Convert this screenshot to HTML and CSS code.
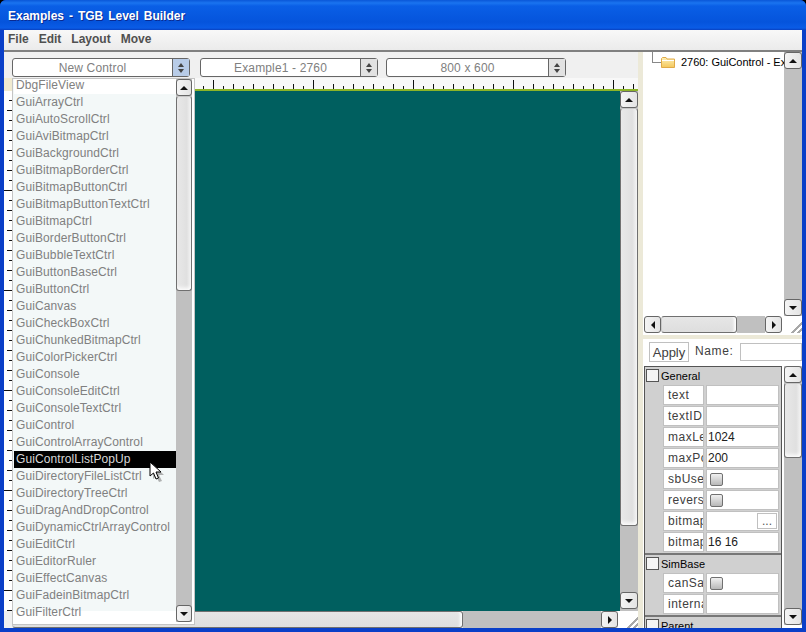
FILE: index.html
```html
<!DOCTYPE html>
<html lang="en">
<head>
<meta charset="utf-8">
<title>Examples - TGB Level Builder</title>
<link rel="stylesheet" href="styles.css">
</head>
<body>
<div class="window">
  <div class="titlebar">Examples - TGB Level Builder</div>
  <div class="client">
    <div class="menubar"><span>File</span><span>Edit</span><span>Layout</span><span>Move</span></div>
    <div class="main">
      <div class="left">
        <div class="toolbar">
          <div class="combo combo-new"><div class="combo-text">New Control</div><div class="combo-btn combo-btn-blue"><i class="up"></i><i class="down"></i></div></div>
          <div class="combo combo-example"><div class="combo-text">Example1 - 2760</div><div class="combo-btn"><i class="up"></i><i class="down"></i></div></div>
          <div class="combo combo-size"><div class="combo-text">800 x 600</div><div class="combo-btn"><i class="up"></i><i class="down"></i></div></div>
        </div>
        <div class="hruler-row"><div class="corner"></div><div class="hruler"></div></div>
        <div class="stage-row">
          <div class="vruler"></div>
          <div class="canvas"></div>
          <div class="vscroll vscroll-canvas">
            <div class="sbtn"><i class="tri-up"></i></div>
            <div class="thumb thumb-canvas"></div>
            <div class="track"></div>
            <div class="sbtn"><i class="tri-down"></i></div>
          </div>
        </div>
        <div class="hscroll hscroll-canvas">
          <div class="thumb-h thumb-h-canvas"></div>
          <div class="track"></div>
          <div class="sbtn-h"><i class="tri-right"></i></div>
          <div class="grip"></div>
        </div>
        <div class="popup">
          <div class="popup-items">
            <div class="item item-first">DbgFileView</div>
            <div class="item">GuiArrayCtrl</div>
            <div class="item">GuiAutoScrollCtrl</div>
            <div class="item">GuiAviBitmapCtrl</div>
            <div class="item">GuiBackgroundCtrl</div>
            <div class="item">GuiBitmapBorderCtrl</div>
            <div class="item">GuiBitmapButtonCtrl</div>
            <div class="item">GuiBitmapButtonTextCtrl</div>
            <div class="item">GuiBitmapCtrl</div>
            <div class="item">GuiBorderButtonCtrl</div>
            <div class="item">GuiBubbleTextCtrl</div>
            <div class="item">GuiButtonBaseCtrl</div>
            <div class="item">GuiButtonCtrl</div>
            <div class="item">GuiCanvas</div>
            <div class="item">GuiCheckBoxCtrl</div>
            <div class="item">GuiChunkedBitmapCtrl</div>
            <div class="item">GuiColorPickerCtrl</div>
            <div class="item">GuiConsole</div>
            <div class="item">GuiConsoleEditCtrl</div>
            <div class="item">GuiConsoleTextCtrl</div>
            <div class="item">GuiControl</div>
            <div class="item">GuiControlArrayControl</div>
            <div class="item item-selected">GuiControlListPopUp</div>
            <div class="item">GuiDirectoryFileListCtrl</div>
            <div class="item">GuiDirectoryTreeCtrl</div>
            <div class="item">GuiDragAndDropControl</div>
            <div class="item">GuiDynamicCtrlArrayControl</div>
            <div class="item">GuiEditCtrl</div>
            <div class="item">GuiEditorRuler</div>
            <div class="item">GuiEffectCanvas</div>
            <div class="item">GuiFadeinBitmapCtrl</div>
            <div class="item">GuiFilterCtrl</div>
          </div>
          <div class="vscroll vscroll-popup">
            <div class="sbtn"><i class="tri-up"></i></div>
            <div class="thumb thumb-popup"></div>
            <div class="track"></div>
            <div class="sbtn"><i class="tri-down"></i></div>
          </div>
        </div>
        <svg class="cursor" width="16" height="22" viewBox="0 0 16 22">
          <path d="M4 3 L15 14 L10 14 L13 20 L10 21 L7 15 L4 18 Z" fill="#777" opacity=".55"/>
          <path d="M1 1 V15 L4.5 12 L7 18 L9.5 17 L7 11 H12 Z" fill="#fff" stroke="#000" stroke-width="1"/>
        </svg>
      </div>
      <div class="splitter"></div>
      <div class="right">
        <div class="tree-pane">
          <div class="tree-row">
            <div class="tree-view">
              <div class="tree-line"></div>
              <svg class="folder" width="14" height="11" viewBox="0 0 14 11">
                <defs><linearGradient id="fg" x1="0" y1="0" x2="0" y2="1"><stop offset="0" stop-color="#fdf0b8"/><stop offset="1" stop-color="#f4c85c"/></linearGradient></defs>
                <path d="M.5 10.5 V1.5 L1.5 .5 H5 L6 2 H13.5 V10.5 Z" fill="url(#fg)" stroke="#e0aa48"/>
                <path d="M1 3.5 H13" stroke="#fff" fill="none"/>
              </svg>
              <span class="tree-label">2760: GuiControl - Examples</span>
            </div>
            <div class="vscroll vscroll-tree">
              <div class="sbtn"><i class="tri-up"></i></div>
              <div class="track"></div>
              <div class="sbtn"><i class="tri-down"></i></div>
            </div>
          </div>
          <div class="hscroll hscroll-tree">
            <div class="sbtn-h"><i class="tri-left"></i></div>
            <div class="thumb-h thumb-h-tree"></div>
            <div class="track"></div>
            <div class="sbtn-h"><i class="tri-right"></i></div>
            <div class="grip"></div>
          </div>
        </div>
        <div class="hsplit"></div>
        <div class="apply-row">
          <div class="apply-btn">Apply</div>
          <div class="name-label">Name:</div>
          <div class="name-input"></div>
        </div>
        <div class="inspector-row">
          <div class="inspector">
            <div class="group">
              <div class="group-head"><i class="check"></i>General</div>
              <div class="prop"><div class="pname">text</div><div class="pval"></div></div>
              <div class="prop"><div class="pname">textID</div><div class="pval"></div></div>
              <div class="prop"><div class="pname">maxLength</div><div class="pval">1024</div></div>
              <div class="prop"><div class="pname">maxPopupHeight</div><div class="pval">200</div></div>
              <div class="prop"><div class="pname">sbUsesNAColor</div><div class="pval"><i class="pcheck"></i></div></div>
              <div class="prop"><div class="pname">reverseTextList</div><div class="pval"><i class="pcheck"></i></div></div>
              <div class="prop"><div class="pname">bitmap</div><div class="pval pval-file"><span class="dots">...</span></div></div>
              <div class="prop"><div class="pname">bitmapBounds</div><div class="pval">16 16</div></div>
            </div>
            <div class="group">
              <div class="group-head"><i class="check"></i>SimBase</div>
              <div class="prop"><div class="pname">canSaveDynamicFields</div><div class="pval"><i class="pcheck"></i></div></div>
              <div class="prop"><div class="pname">internalName</div><div class="pval"></div></div>
            </div>
            <div class="group">
              <div class="group-head"><i class="check"></i>Parent</div>
            </div>
          </div>
          <div class="vscroll vscroll-insp">
            <div class="sbtn"><i class="tri-up"></i></div>
            <div class="thumb thumb-insp"></div>
            <div class="track"></div>
            <div class="sbtn"><i class="tri-down"></i></div>
          </div>
        </div>
      </div>
    </div>
  </div>
</div>
</body>
</html>
```
FILE: styles.css
```css
* { box-sizing: border-box; }
html, body { margin: 0; padding: 0; overflow: hidden; }
i { display: block; font-style: normal; }
body { background: #000; }
.window {
  width: 806px; height: 632px; display: flex; flex-direction: column;
  background: #0a3fc8; font-family: "Liberation Sans", Arial, sans-serif; font-size: 12px;
  border-radius: 6px 6px 0 0; overflow: hidden; padding: 0 4px 4px;
}
.titlebar {
  height: 30px; flex: none; margin: 0 -4px; padding: 2px 0 0 8px; display: flex; align-items: center;
  background: linear-gradient(#0a57d8 0, #1a74f0 3px, #0a5fe6 6px, #0554dc 22px, #0a5ce6 28px, #0840c0 30px);
  color: #fff; font-size: 12px; font-weight: bold; text-shadow: 1px 1px 0 #0a2a90; word-spacing: 1.6px;
}
.client { flex: 1; min-height: 0; display: flex; flex-direction: column; background: #f0f0f0; }
.menubar {
  height: 22px; flex: none; display: flex; align-items: center; padding: 0 0 2px 4px;
  background: linear-gradient(#f8f8f8, #ebebeb); border-bottom: 2px solid #808080;
  font-weight: bold; color: #505050;
}
.menubar span { margin-right: 10px; }
.main { flex: 1; min-height: 0; display: flex; }
.left { width: 634px; flex: none; display: flex; flex-direction: column; position: relative; background: #f0f0f0; }
.toolbar { height: 26px; flex: none; display: flex; align-items: flex-start; padding: 6px 0 0 8px; }
.combo {
  height: 19px; display: flex; background: #fff; border: 1px solid #666; border-radius: 3px;
  color: #808080; font-size: 12px; letter-spacing: .15px;
}
.combo-new { width: 178px; margin-right: 10px; }
.combo-example { width: 178px; margin-right: 8px; }
.combo-size { width: 180px; }
.combo-text { flex: 1; text-align: center; line-height: 19px; }
.combo-btn {
  width: 17px; border-left: 1px solid #666; background: #e2e2e2; display: flex; flex-direction: column;
  align-items: center; justify-content: center; gap: 2px;
}
.combo-btn-blue { background: #b8cce8; }
.combo-btn .up { border: 3px solid transparent; border-top: 0; border-bottom: 4px solid #444; }
.combo-btn .down { border: 3px solid transparent; border-bottom: 0; border-top: 4px solid #444; }
.hruler-row { height: 13px; flex: none; display: flex; }
.corner { width: 8px; flex: none; background: #f0ead0; }
.hruler {
  flex: 1; border-bottom: 2px solid #8cb428;
  background-color: #f8f8f8;
  background-image:
    linear-gradient(90deg, #111 1px, transparent 1px),
    linear-gradient(90deg, #111 1px, transparent 1px),
    linear-gradient(90deg, #111 1px, transparent 1px);
  background-repeat: repeat-x;
  background-size: 100px 9px, 20px 5px, 20px 3px;
  background-position: 1px 2px, 1px 6px, 11px 8px;
  background-origin: padding-box;
  background-clip: padding-box;
}
.stage-row { flex: 1; min-height: 0; display: flex; }
.vruler {
  width: 8px; flex: none; background-color: #fff;
  background-image:
    linear-gradient(#111 1px, transparent 1px),
    linear-gradient(#111 1px, transparent 1px),
    linear-gradient(#111 1px, transparent 1px);
  background-repeat: repeat-y;
  background-size: 8px 100px, 5px 20px, 3px 20px;
  background-position: 0 -1px, 3px -1px, 5px 9px;
}
.canvas { flex: 1; background: #005f5f; }
.vscroll { display: flex; flex-direction: column; flex: none; width: 18px; background: #c0c0c0; }
.vscroll .track, .hscroll .track { flex: 1; background: #c0c0c0; }
.sbtn, .sbtn-h {
  flex: none; background: linear-gradient(90deg, #f4f4f4, #e4e4e4); border: 1px solid #666;
  border-radius: 3px; display: flex; align-items: center; justify-content: center;
}
.sbtn { height: 17px; }
.sbtn-h { width: 17px; }
.tri-up { border: 4px solid transparent; border-top: 0; border-bottom: 4px solid #111; }
.tri-down { border: 4px solid transparent; border-bottom: 0; border-top: 4px solid #111; }
.tri-left { border: 4px solid transparent; border-left: 0; border-right: 4px solid #111; }
.tri-right { border: 4px solid transparent; border-right: 0; border-left: 4px solid #111; }
.thumb {
  flex: none; background: linear-gradient(90deg, #e8e8e8, #e0e0e0 70%, #f4f4f4);
  border: 1px solid #707070; border-top-color: #c8c8c8; border-radius: 3px;
  box-shadow: inset 0 -5px 4px -3px #fff;
}
.thumb-canvas { height: 418px; }
.thumb-popup { height: 195px; }
.thumb-insp { height: 75px; }
.vscroll-canvas { padding-bottom: 2px; }
.hscroll { display: flex; flex: none; height: 17px; }
.hscroll-canvas { margin: 0 0 0 8px; }
.thumb-h {
  flex: none; background: linear-gradient(#e6e6e6, #dedede);
  border: 1px solid #707070; border-left-color: #c8c8c8; border-radius: 3px;
  box-shadow: inset -4px 0 3px -2px #fff;
}
.thumb-h-canvas { width: 451px; }
.thumb-h-tree { width: 76px; }
.grip {
  width: 20px; flex: none; background: #fff;
  background-image: linear-gradient(135deg, transparent 70%, #a8a8a8 70%, #a8a8a8 76%, transparent 76%, transparent 86%, #a8a8a8 86%, #a8a8a8 92%, transparent 92%);
}
.popup {
  position: absolute; left: 8px; top: 26px; width: 183px; height: 547px; display: flex;
  background: #fff; border: 1px solid #c4c4c4; padding-right: 2px;
}
.popup-items { flex: 1; min-width: 0; height: 532px; background: #f3f8f8; padding-left: 1px; }
.item { height: 17px; line-height: 16px; padding-left: 2px; color: #808080; font-size: 12px; letter-spacing: .1px; white-space: nowrap; }
.item-first { height: 15px; line-height: 13px; background: #fff; }
.item-selected { background: #000; color: #d8d8d8; }
.vscroll-popup { width: 16px; height: 543px; }
.cursor { position: absolute; left: 145px; top: 409px; }
.splitter { width: 5px; flex: none; background: #ece9d8; }
.right { width: 159px; flex: none; display: flex; flex-direction: column; background: #fff; }
.tree-pane { flex: none; height: 283px; display: flex; flex-direction: column; }
.tree-row { flex: none; height: 264px; display: flex; }
.tree-view { flex: 1; min-width: 0; position: relative; overflow: hidden; display: flex; align-items: flex-start; padding: 5px 0 0 18px; }
.tree-line { position: absolute; left: 9px; top: 0; width: 9px; height: 11px; border-left: 1px solid #888; border-bottom: 1px solid #888; }
.folder { flex: none; margin-right: 6px; }
.tree-label { white-space: nowrap; font-size: 11px; color: #000; line-height: 11px; letter-spacing: -.03px; }
.vscroll-tree { height: 264px; }
.hscroll-tree { margin-left: 1px; height: 17px; }
.hsplit { height: 4px; flex: none; background: #ece9d8; }
.apply-row { height: 27px; flex: none; display: flex; align-items: flex-start; overflow: hidden; padding: 3px 0 0 6px; }
.apply-btn { width: 40px; height: 20px; border: 1px solid #c0c0c0; text-align: center; line-height: 19px; color: #404040; font-size: 13px; }
.name-label { margin-left: 6px; width: 45px; flex: none; line-height: 18px; color: #404040; letter-spacing: .6px; }
.name-input { width: 62px; flex: none; height: 18px; margin-top: 1px; border: 1px solid #c0c0c0; }
.inspector-row { flex: 1; min-height: 0; display: flex; padding-left: 1px; gap: 2px; }
.inspector { width: 138px; flex: none; overflow: hidden; border-right: 1px solid #555; border-top: 1px solid #555; border-left: 1px solid #555; background: #d0d0d0; }
.group { border-bottom: 2px solid #777; }
.group-head { height: 17px; margin-bottom: 1px; display: flex; align-items: center; padding-left: 1px; color: #000; font-size: 11px; }
.check { width: 13px; height: 13px; border: 1px solid #555; background: #f4f4f4; margin-right: 2px; }
.prop { display: flex; padding-left: 18px; height: 21px; gap: 2px; padding-bottom: 1px; }
.pname, .pval { background: #fff; border: 1px solid #c0c0c0; overflow: hidden; white-space: nowrap; }
.pname { width: 41px; padding-left: 4px; line-height: 18px; color: #404040; letter-spacing: .5px; flex: none; }
.pval { width: 73px; flex: none; padding-left: 1px; line-height: 18px; color: #202020; display: flex; align-items: center; }
.pcheck { width: 13px; height: 13px; margin-left: 2px; border: 1px solid #707070; border-radius: 2px; background: linear-gradient(#f0f0f0, #b8b8b8); }
.pval-file { justify-content: flex-end; padding-right: 1px; }
.dots { width: 20px; height: 16px; border: 1px solid #c0c0c0; text-align: center; line-height: 15px; color: #555; }
.vscroll-insp { height: 259px; }
```
